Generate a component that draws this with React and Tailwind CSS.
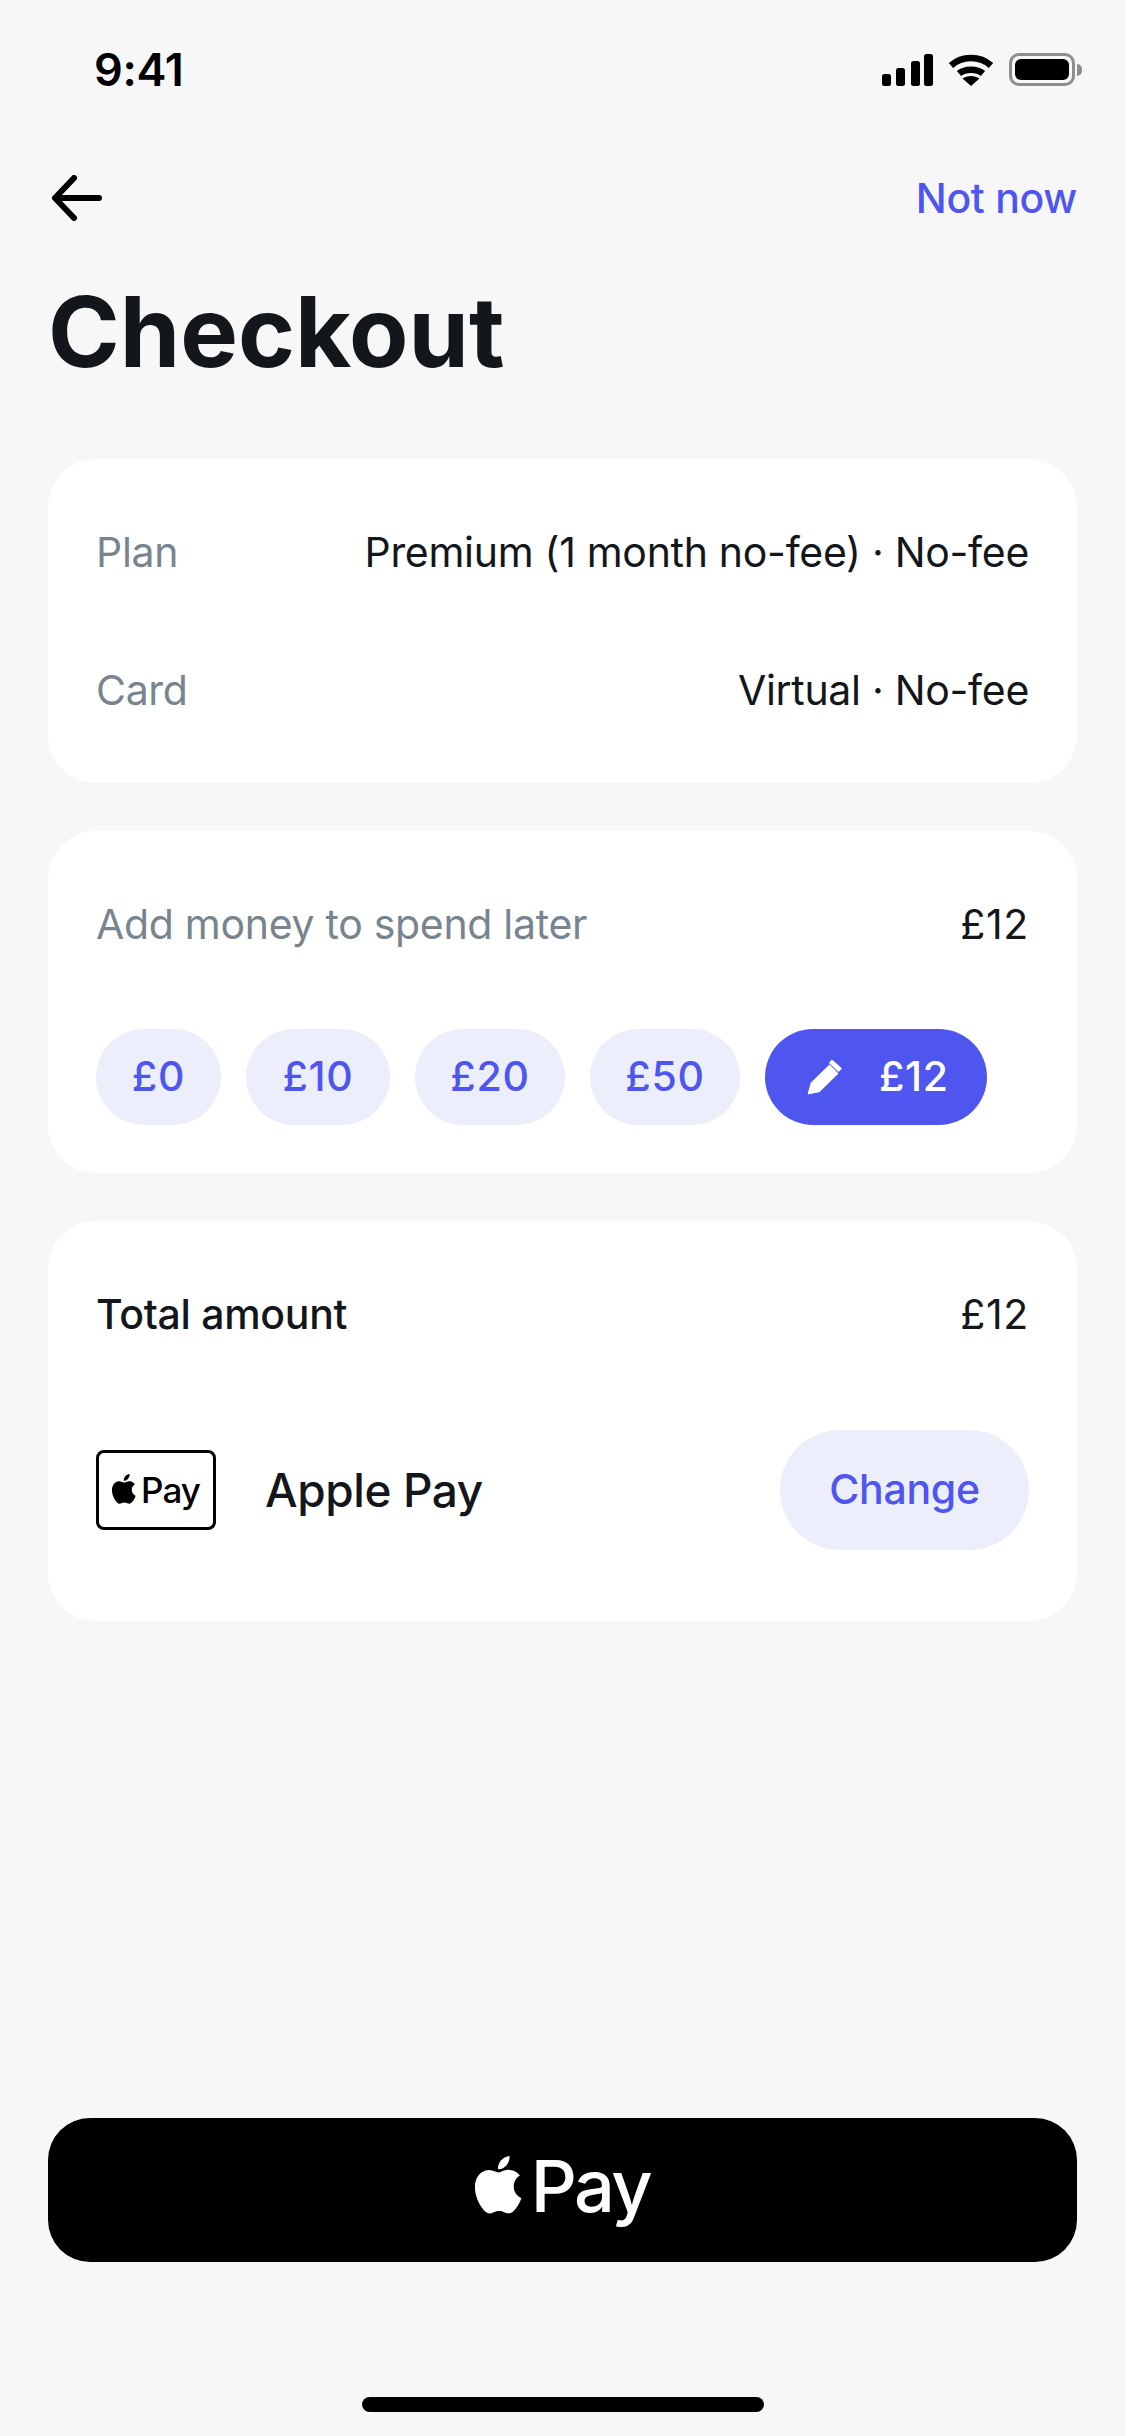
const APPLE_PATH =
  "M18.71 19.5c-.83 1.24-1.71 2.45-3.05 2.47-1.34.03-1.77-.79-3.29-.79-1.53 0-2 .77-3.27.82-1.31.05-2.3-1.32-3.14-2.53C4.25 17 2.94 12.45 4.7 9.39c.87-1.52 2.43-2.48 4.12-2.51 1.28-.02 2.5.87 3.29.87.78 0 2.26-1.07 3.81-.91.65.03 2.47.26 3.64 1.98-.09.06-2.17 1.28-2.15 3.81.03 3.02 2.65 4.03 2.68 4.04-.03.07-.42 1.44-1.38 2.83M13 3.5c.73-.83 1.94-1.46 2.94-1.5.13 1.17-.34 2.35-1.04 3.19-.69.85-1.83 1.51-2.95 1.42-.15-1.15.41-2.35 1.05-3.11z";

const AppleLogo = ({ className }) => (
  <svg className={className} viewBox="3.9 2 16.4 20.2" fill="currentColor" preserveAspectRatio="none">
    <path d={APPLE_PATH} />
  </svg>
);

const StatusIcons = () => (
  <div className="flex items-center">
    <svg width="51" height="32" viewBox="0 0 51 32" fill="#000">
      <rect x="0" y="20" width="9" height="12" rx="2.5" />
      <rect x="14" y="14" width="9" height="18" rx="2.5" />
      <rect x="29" y="7" width="9" height="25" rx="2.5" />
      <rect x="42" y="0" width="9" height="32" rx="2.5" />
    </svg>
    <svg className="ml-[15px]" width="46" height="32" viewBox="0 0 46 32">
      <path d="M3 11.5C14 1.5 32 1.5 43 11.5" fill="none" stroke="#000" strokeWidth="6.5" />
      <path d="M11 19.5C17 14.5 29 14.5 35 19.5" fill="none" stroke="#000" strokeWidth="6.5" />
      <path d="M23 32L14.5 24.5C19 21 27 21 31.5 24.5Z" fill="#000" />
    </svg>
    <div className="ml-[15px] w-[66px] h-[33px] rounded-[10px] border-[3px] border-[#8e8e8e] p-[3px]">
      <div className="w-full h-full rounded-[6px] bg-black" />
    </div>
    <div className="w-[5px] h-[12px] ml-[2px] rounded-r-full bg-[#8e8e8e]" />
  </div>
);

const Row = ({ label, value, labelClass = "text-[#78848e]", valueClass = "" }) => (
  <div className="h-[88px] flex items-center justify-between">
    <span className={labelClass}>{label}</span>
    <span className={`text-[#13171c] ${valueClass}`}>{value}</span>
  </div>
);

const amounts = [
  { label: "£0", width: "w-[125px]" },
  { label: "£10", width: "w-[144px]" },
  { label: "£20", width: "w-[150px]" },
  { label: "£50", width: "w-[150px]" },
];

export default function App() {
  return (
    <div className="w-[1125px] h-[2436px] bg-[#f7f7f7] flex flex-col font-['Inter',sans-serif] text-[41px] tracking-[-0.3px] overflow-hidden">
      {/* status bar */}
      <div className="h-[69px] mt-[35px] pl-[94px] pr-[43px] flex items-center justify-between">
        <span className="text-[45px] font-semibold leading-none text-black">9:41</span>
        <StatusIcons />
      </div>

      {/* nav */}
      <div className="mt-[58px] h-[72px] px-[48px] flex items-center justify-between">
        <svg width="54" height="46" viewBox="0 0 54 46" fill="none" stroke="#000" strokeWidth="6" strokeLinecap="round" strokeLinejoin="round">
          <path d="M51 23H8" />
          <path d="M26 3L7 23L26 43" />
        </svg>
        <span className="mt-[2px] text-[#4f56f0] font-medium">Not now</span>
      </div>

      <h1 className="mt-[39px] pl-[48px] text-[97px] leading-[118px] font-bold tracking-normal text-[#13171c]">Checkout</h1>

      <div className="mt-[68px] px-[48px] flex flex-col gap-[48px]">
        <div className="bg-white rounded-[48px] pt-[50px] pb-[48px] px-[48px] flex flex-col gap-[50px]">
          <Row label="Plan" value="Premium (1 month no-fee) · No-fee" />
          <Row label="Card" value="Virtual · No-fee" />
        </div>

        <div className="bg-white rounded-[48px] pt-[50px] pb-[48px] px-[48px]">
          <Row label="Add money to spend later" value="£12" valueClass="tracking-[0.7px]" />
          <div className="mt-[60px] flex gap-[25px] tracking-[0.7px]">
            {amounts.map((a) => (
              <div key={a.label} className={`${a.width} h-[96px] rounded-full bg-[#eceefb] text-[#4f56f0] font-medium flex items-center justify-center`}>
                {a.label}
              </div>
            ))}
            <div className="w-[222px] h-[96px] rounded-full bg-[#4f56f0] text-white font-medium flex items-center pl-[42px] gap-[36px]">
              <svg width="36" height="36" viewBox="0 0 36 36" fill="currentColor">
                <path d="M1.5 34.5L4.5 24L22.5 6.5L30.5 14.5L12 32.5Z" stroke="currentColor" strokeWidth="1.5" strokeLinejoin="round" />
                <path d="M25 1.5L34 9.5L31.5 12L23 4Z" stroke="currentColor" strokeWidth="1.5" strokeLinejoin="round" />
              </svg>
              £12
            </div>
          </div>
        </div>

        <div className="bg-white rounded-[48px] px-[48px] pt-[50px] pb-[71px]">
          <Row label="Total amount" value="£12" labelClass="text-[#13171c] font-medium" valueClass="tracking-[0.7px]" />
          <div className="mt-[71px] flex items-center justify-between">
            <div className="flex items-center">
              <div className="w-[120px] h-[80px] rounded-[8px] border-[3px] border-black flex items-center justify-center gap-[5px] text-black">
                <AppleLogo className="w-[24px] h-[30px] mb-[3px]" />
                <span className="text-[35px] font-medium leading-none tracking-[-1px]">Pay</span>
              </div>
              <span className="ml-[49px] text-[46px] font-medium tracking-[-0.4px] text-[#13171c]">Apple Pay</span>
            </div>
            <div className="w-[249px] h-[120px] rounded-full bg-[#eceefb] text-[#4f56f0] font-medium flex items-center justify-center">
              Change
            </div>
          </div>
        </div>
      </div>

      <div className="mt-auto mx-[48px] h-[144px] rounded-[42px] bg-black text-white flex items-center justify-center gap-[9px]">
        <AppleLogo className="w-[47px] h-[58px] mb-[10px]" />
        <span className="text-[72px] font-medium leading-none tracking-[-2.5px] mb-[8px]">Pay</span>
      </div>

      <div className="mt-[135px] mb-[24px] mx-auto w-[402px] h-[15px] rounded-full bg-black" />
    </div>
  );
}
